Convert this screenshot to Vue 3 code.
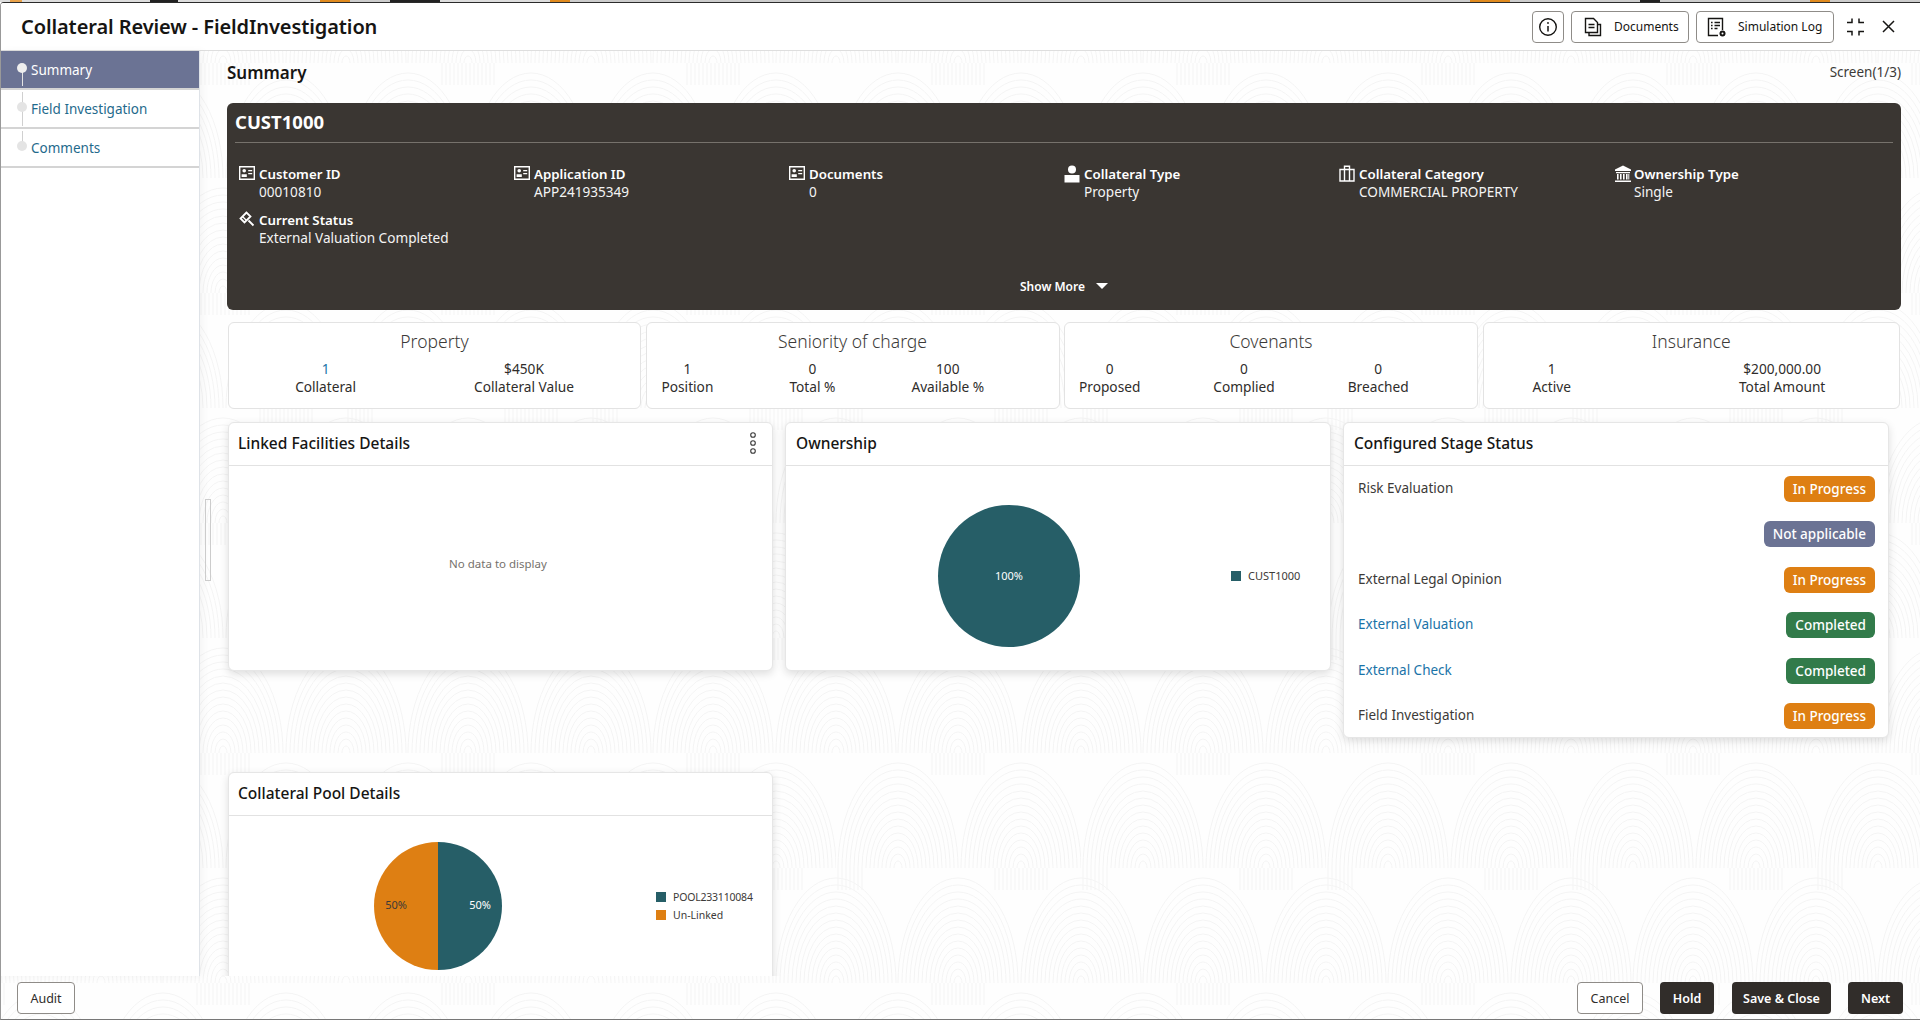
<script setup>
const nav = ['Summary', 'Field Investigation', 'Comments']
const fields = [
  { icon: 'id', label: 'Customer ID', value: '00010810' },
  { icon: 'id', label: 'Application ID', value: 'APP241935349' },
  { icon: 'id', label: 'Documents', value: '0' },
  { icon: 'person', label: 'Collateral Type', value: 'Property' },
  { icon: 'case', label: 'Collateral Category', value: 'COMMERCIAL PROPERTY' },
  { icon: 'bank', label: 'Ownership Type', value: 'Single' },
  { icon: 'gavel', label: 'Current Status', value: 'External Valuation Completed' },
]
const stats = [
  { title: 'Property', cls: 'two', items: [['1', 'Collateral', true], ['$450K', 'Collateral Value']] },
  { title: 'Seniority of charge', cls: 'three', items: [['1', 'Position'], ['0', 'Total %'], ['100', 'Available %']] },
  { title: 'Covenants', cls: 'cov', items: [['0', 'Proposed'], ['0', 'Complied'], ['0', 'Breached']] },
  { title: 'Insurance', cls: 'ins', items: [['1', 'Active'], ['$200,000.00', 'Total Amount']] },
]
const stages = [
  { name: 'Risk Evaluation', status: 'In Progress', kind: 'orange' },
  { name: '', status: 'Not applicable', kind: 'slate' },
  { name: 'External Legal Opinion', status: 'In Progress', kind: 'orange' },
  { name: 'External Valuation', status: 'Completed', kind: 'green', link: true },
  { name: 'External Check', status: 'Completed', kind: 'green', link: true },
  { name: 'Field Investigation', status: 'In Progress', kind: 'orange' },
]
const rings = Array.from({ length: 15 }, (_, i) => 4 + i * 4)
const hatch = Array.from({ length: 14 }, (_, i) => -26 + i * 4)
const arches = [[62, 115], [185, 115], [0, 230], [122, 230], [245, 230]]
const bands = [[122, 0], [185, 115], [0, 115]]
</script>

<template>
  <div class="root">
    <div class="strip"></div>
    <div class="modal">
      <svg class="pattern" width="1920" height="1020" aria-hidden="true">
        <defs>
          <pattern id="swirl" width="245" height="230" patternUnits="userSpaceOnUse" patternTransform="translate(100 60)">
            <g fill="none" stroke="#f4f4f4" stroke-width="1">
              <template v-for="(a, i) in arches" :key="'a' + i">
                <path v-for="r in rings" :key="r" :d="`M${a[0] - r} ${a[1]} A${r} ${r * 1.75} 0 0 1 ${a[0] + r} ${a[1]}`" />
              </template>
              <template v-for="(b, i) in bands" :key="'b' + i">
                <path v-for="s in hatch" :key="s" :d="`M${b[0] + s} ${b[1]} v22`" />
              </template>
            </g>
          </pattern>
        </defs>
        <rect width="1920" height="1020" fill="#fefefe" />
        <rect width="1920" height="1020" fill="url(#swirl)" />
      </svg>

      <header class="head">
        <h1>Collateral Review - FieldInvestigation</h1>
        <div class="head-actions">
          <button class="tool square" aria-label="Info">
            <svg width="20" height="20" viewBox="0 0 20 20" fill="none" stroke="#161513" stroke-width="1.4">
              <circle cx="10" cy="10" r="8.3" />
              <path d="M10 9v5.5" stroke-width="1.5" />
              <circle cx="10" cy="6" r=".9" fill="#161513" stroke="none" />
            </svg>
          </button>
          <button class="tool docs">
            <svg width="18" height="20" viewBox="0 0 18 20" fill="none" stroke="#161513" stroke-width="1.4">
              <path d="M1.5 1.5h8l4 4v10h-12z" />
              <path d="M5 16v2.5h11.5V7.5h-3" />
              <path d="M4.5 7.5h6M4.5 10.5h6" />
            </svg>
            <span>Documents</span>
          </button>
          <button class="tool sim">
            <svg width="20" height="20" viewBox="0 0 20 20" fill="none" stroke="#161513" stroke-width="1.4">
              <path d="M11 18.5H1.5v-17h14V13" />
              <path d="M4 5.5h1.6M7.5 5.5h5.5M4 8.5h1.6M7.5 8.5h5.5M4 11.5h1.6M7.5 11.5h3" />
              <circle cx="15.5" cy="16.5" r="3" fill="#161513" stroke="none" />
              <circle cx="15.5" cy="16.5" r="1" fill="#fff" stroke="none" />
            </svg>
            <span>Simulation Log</span>
          </button>
          <svg class="collapse" width="19" height="18" viewBox="0 0 19 18" fill="none" stroke="#161513" stroke-width="1.5">
            <path d="M1 4.5h5V.5M13 .5v4h5M1 13.5h5v4M13 17.5v-4h5" />
          </svg>
          <svg class="close" width="13" height="13" viewBox="0 0 13 13" fill="none" stroke="#161513" stroke-width="1.5">
            <path d="M1 1l11 11M12 1L1 12" />
          </svg>
        </div>
      </header>

      <div class="body">
        <aside class="side">
          <div v-for="(n, i) in nav" :key="n" class="nav-item" :class="{ active: i === 0 }">
            <i class="tick" :class="'tick' + i"></i>
            <i class="dot"></i>
            <span>{{ n }}</span>
          </div>
        </aside>
        <i class="handle"></i>

        <main class="main">
          <div class="title-row">
            <h2>Summary</h2>
            <span>Screen(1/3)</span>
          </div>

          <section class="hero">
            <div class="hero-title">CUST1000</div>
            <div class="hero-grid">
              <div v-for="f in fields" :key="f.label" class="field">
                <span class="ficon">
                  <svg v-if="f.icon === 'id'" width="16" height="16" viewBox="0 0 16 16">
                    <path fill="#fff" fill-rule="evenodd" d="M0 1h16v14H0zM1.4 2.4v11.2h13.2V2.4z" />
                    <circle cx="5.2" cy="5.8" r="1.8" fill="#fff" />
                    <path fill="#fff" d="M2.6 12V9.2h5.2V12zM9.2 5h4v1.3h-4zM9.2 8h4v1.3h-4z" />
                  </svg>
                  <svg v-else-if="f.icon === 'person'" width="16" height="18" viewBox="0 0 16 18">
                    <circle cx="8" cy="4.5" r="4" fill="#fff" />
                    <path fill="#fff" d="M.5 10h15v7.5H.5z" />
                  </svg>
                  <svg v-else-if="f.icon === 'case'" width="16" height="17" viewBox="0 0 16 17" fill="none" stroke="#fff" stroke-width="1.4">
                    <path d="M1 4.5h14v11.5H1zM5.5 4.5V1.2h5v3.3M5.5 4.5V16M10.5 4.5V16" />
                  </svg>
                  <svg v-else-if="f.icon === 'bank'" width="18" height="18" viewBox="0 0 18 18" fill="#fff">
                    <path d="M9 .5l8 4v1.5H1V4.500z" />
                    <path d="M2 7h14v1.200H2zM3 9h1.600v5.500H3zM6 9h1.600v5.500H6zM9 9h1.600v5.500H9zM12 9h1.600v5.500H12zM14.300 9h1v5.500h-1zM1 15.500h16V17H1z" />
                  </svg>
                  <svg v-else width="16" height="16" viewBox="0 0 16 16" fill="none" stroke="#fff" stroke-width="1.8">
                    <path d="M7.500 1.500L1.500 7.500l4 4 6-6zM9.500 9.500l5 5" />
                    <path d="M3.500 5.500l4 4" stroke-width="1.200" />
                  </svg>
                </span>
                <div>
                  <div class="flabel">{{ f.label }}</div>
                  <div class="fvalue">{{ f.value }}</div>
                </div>
              </div>
            </div>
            <div class="more">
              <span>Show More</span>
              <i class="tri"></i>
            </div>
          </section>

          <section class="stats">
            <div v-for="s in stats" :key="s.title" class="stat">
              <div class="stat-title">{{ s.title }}</div>
              <div class="stat-row" :class="s.cls">
                <div v-for="it in s.items" :key="it[1]" class="stat-item">
                  <div :class="{ link: it[2] }">{{ it[0] }}</div>
                  <div>{{ it[1] }}</div>
                </div>
              </div>
            </div>
          </section>

          <section class="widgets">
            <article class="card short">
              <div class="card-head first">
                <h3>Linked Facilities Details</h3>
                <svg width="8" height="24" viewBox="0 0 8 24" fill="none" stroke="#3a3a3a" stroke-width="1.100">
                  <circle cx="4" cy="4" r="2.300" />
                  <circle cx="4" cy="12" r="2.300" />
                  <circle cx="4" cy="20" r="2.300" />
                </svg>
              </div>
              <div class="empty">No data to display</div>
            </article>

            <article class="card short">
              <div class="card-head"><h3>Ownership</h3></div>
              <svg class="chart" width="546" height="206" viewBox="0 0 546 206">
                <circle cx="223" cy="110" r="71" fill="#265E67" />
                <text x="223" y="114" class="lbl white" text-anchor="middle">100%</text>
                <rect x="445" y="105" width="10" height="10" fill="#265E67" />
                <text x="462" y="114" class="lbl">CUST1000</text>
              </svg>
            </article>

            <article class="card stages">
              <div class="card-head"><h3>Configured Stage Status</h3></div>
              <div class="stage-list">
                <div v-for="(s, i) in stages" :key="i" class="stage">
                  <span :class="{ link: s.link }">{{ s.name }}</span>
                  <b class="badge" :class="s.kind">{{ s.status }}</b>
                </div>
              </div>
            </article>

            <article class="card pool">
              <div class="card-head first"><h3>Collateral Pool Details</h3></div>
              <svg class="chart" width="545" height="206" viewBox="0 0 545 206">
                <path d="M209 26a64 64 0 0 1 0 128z" fill="#265E67" />
                <path d="M209 26a64 64 0 0 0 0 128z" fill="#DE7F13" />
                <text x="167" y="93" class="lbl" text-anchor="middle">50%</text>
                <text x="251" y="93" class="lbl white" text-anchor="middle">50%</text>
                <rect x="427" y="76" width="10" height="10" fill="#265E67" />
                <text x="444" y="85" class="lbl small tight">POOL233110084</text>
                <rect x="427" y="94" width="10" height="10" fill="#DE7F13" />
                <text x="444" y="103" class="lbl small">Un-Linked</text>
              </svg>
            </article>
          </section>
        </main>
      </div>

      <footer class="foot">
        <button class="btn ghost audit">Audit</button>
        <div class="foot-right">
          <button class="btn ghost cancel">Cancel</button>
          <button class="btn dark hold">Hold</button>
          <button class="btn dark save">Save &amp; Close</button>
          <button class="btn dark next">Next</button>
        </div>
      </footer>
    </div>
  </div>
</template>

<style>
html, body { margin: 0; overflow: hidden; background: #fff; }
</style>

<style scoped>
* { box-sizing: border-box; }
.root {
  width: 1920px; height: 1020px; display: flex; flex-direction: column;
  font-family: "Noto Sans", "Liberation Sans", sans-serif; color: #161513; font-size: 14px;
}
.strip {
  height: 2px; flex: none;
  background: linear-gradient(90deg, #ddd 0 10px, #e9a24a 10px 22px, #ddd 22px 150px, #222 150px 178px, #ddd 178px 320px, #e08a1e 320px 350px, #ccc 350px 390px, #222 390px 440px, #ddd 440px 550px, #e08a1e 550px 570px, #ccc 570px 1470px, #e08a1e 1470px 1510px, #ccc 1510px 1640px, #222 1640px 1660px, #ccc 1660px 1810px, #e08a1e 1810px 1830px, #ccc 1830px);
}
.modal {
  position: relative; flex: 1; min-height: 0; display: flex; flex-direction: column;
  border-top: 1px solid #2b2b2b; border-left: 1px solid #999; border-bottom: 1px solid #777;
  border-top-left-radius: 4px; overflow: hidden;
}
.pattern { position: absolute; left: 0; top: 0; }
.head {
  position: relative; flex: none; height: 48px; background: #fff; border-bottom: 1px solid #dedede;
  display: flex; align-items: center; justify-content: space-between; padding: 0 25px 0 20px;
}
h1 { margin: 0; font-size: 20px; font-weight: 600; color: #161513; letter-spacing: -.1px; }
.head-actions { display: flex; align-items: center; }
.tool {
  height: 32px; background: #fff; border: 1px solid #8f8c88; border-radius: 4px; padding: 0;
  display: flex; align-items: center; font: inherit; font-size: 12px; color: #161513;
}
.square { width: 32px; justify-content: center; margin-right: 7px; }
.docs { width: 118px; padding-left: 12px; gap: 12px; margin-right: 7px; }
.sim { width: 138px; padding-left: 10px; gap: 11px; margin-right: 12px; }
.collapse { margin-right: 17px; }
.body { position: relative; flex: 1; min-height: 0; display: flex; }
.side {
  position: relative; flex: none; width: 199px; background: #fff; border-right: 1px solid #dfe3e8;
  box-shadow: 3px 0 8px rgba(0, 0, 0, .04);
}
.nav-item {
  position: relative; height: 39px; border-bottom: 2px solid #d4d4d4; display: flex; align-items: center;
  padding-left: 30px; color: #1f6a8c; font-size: 13.500px;
}
.nav-item.active { background: #6b7394; color: #fff; }
.dot { position: absolute; left: 16px; top: 12px; width: 10px; height: 10px; border-radius: 50%; background: #e4e4e4; }
.active .dot { background: #eee; }
.tick { position: absolute; left: 21px; width: 1px; background: #d0d0d0; }
.active .tick { background: #e4e4e4; }
.tick0 { top: 20px; height: 15px; }
.tick1 { top: 2px; height: 34px; }
.tick2 { top: 2px; height: 16px; }
.handle {
  position: absolute; left: 204px; top: 448px; width: 6px; height: 82px; border: 1px solid #ccc; z-index: 1;
}
.main { position: relative; flex: 1; min-width: 0; overflow: hidden; padding: 0 19px 0 27px; }
.title-row { height: 52px; display: flex; justify-content: space-between; align-items: center; padding-bottom: 10px; }
h2 { margin: 0; font-size: 17px; font-weight: 600; color: #161513; }
.title-row span { font-size: 13.500px; color: #3c3a38; }
.hero {
  height: 207px; background: #3A3632; border-radius: 6px; color: #fff; padding: 0 8px; display: flex; flex-direction: column;
}
.hero-title {
  flex: none; height: 40px; border-bottom: 1px solid #76726c; font-size: 18.500px; font-weight: 700; line-height: 38px;
}
.hero-grid { flex: none; margin: 22px 0 0 4px; display: grid; grid-template-columns: repeat(6, 275px); row-gap: 10px; }
.field { display: flex; height: 36px; }
.ficon { flex: none; width: 20px; display: block; }
.ficon svg { display: block; margin-top: 0; }
.flabel { font-size: 13.300px; font-weight: 600; line-height: 18px; white-space: nowrap; }
.fvalue { font-size: 13.600px; line-height: 18px; white-space: nowrap; color: #f4f4f4; }
.more { margin-top: auto; height: 46px; display: flex; align-items: center; justify-content: center; gap: 11px; font-size: 12px; font-weight: 600; padding-bottom: 2px; }
.tri { width: 0; height: 0; border-left: 6px solid transparent; border-right: 6px solid transparent; border-top: 6px solid #fff; }
.stats { margin: 12px 1px 0; display: grid; grid-template-columns: 413px 414px 414px 1fr; column-gap: 4.500px; }
.stat { height: 87px; background: #fff; border: 1px solid #e3e3e3; border-radius: 6px; }
.stat-title { text-align: center; font-size: 17.500px; font-weight: 300; line-height: 24px; margin-top: 6px; color: #3c3a38; }
.stat-row { display: flex; margin-top: 7px; text-align: center; font-size: 13.700px; line-height: 18px; color: #2f2d2b; }
.two { justify-content: center; column-gap: 118px; }
.three { padding-left: 15px; column-gap: 76px; }
.cov { padding-left: 14px; column-gap: 73px; }
.ins { padding-left: 49px; column-gap: 168px; }
.link { color: #1a73a8; }
.widgets {
  margin: 13px 0 0 1px; display: grid; grid-template-columns: 545px 546px 546px; column-gap: 12px; row-gap: 34px; align-items: start;
}
.card { background: #fff; border-radius: 6px; border: 1px solid #e6e6e6; box-shadow: 0 3px 8px rgba(0, 0, 0, .13); }
.short { height: 249px; }
.stages { height: 316px; }
.pool { height: 250px; grid-column: 1; }
.card-head {
  height: 43px; border-bottom: 1px solid #e2e2e2; padding: 0 15px 2px 10px; display: flex; align-items: center; justify-content: space-between;
}
.first { padding-left: 9px; }
h3 { margin: 0; font-size: 15.500px; font-weight: 500; color: #161513; }
.empty { height: 204px; display: flex; align-items: center; justify-content: center; font-size: 11.500px; color: #75716d; padding: 0 5px 10px 0; }
.chart { display: block; }
.lbl { font-size: 11px; fill: #3c3a38; }
.small { font-size: 10.500px; }
.tight { letter-spacing: -.2px; }
.white { fill: #fff; }
.stage-list { padding: 10px 13px 10px 14px; display: flex; flex-direction: column; gap: 19.400px; }
.stage { height: 26px; display: flex; align-items: center; justify-content: space-between; font-size: 13.500px; color: #3c3a38; }
.stage span { padding-bottom: 2px; }
.stage .link { color: #1a73a8; }
.badge { height: 26px; border-radius: 6px; padding: 0 9px; color: #fff; font-weight: 500; font-size: 13.500px; line-height: 26px; }
.orange { background: #DE7F13; }
.slate { background: #6B7394; }
.green { background: #327B4A; }
.foot {
  position: relative; flex: none; height: 43px; padding: 6px 17px 0 16px; display: flex; justify-content: space-between; align-items: flex-start;
}
.foot-right { display: flex; }
.btn { height: 32px; border-radius: 4px; font: inherit; font-size: 12.500px; padding: 0; text-align: center; }
.ghost { background: #fff; border: 1px solid #8f8c88; color: #2f2d2b; }
.dark { background: #312D2A; border: 0; color: #fff; font-weight: 600; }
.audit { width: 58px; }
.cancel { width: 66px; margin-right: 17px; }
.hold { width: 54px; margin-right: 18px; }
.save { width: 99px; margin-right: 17px; }
.next { width: 55px; }
</style>
